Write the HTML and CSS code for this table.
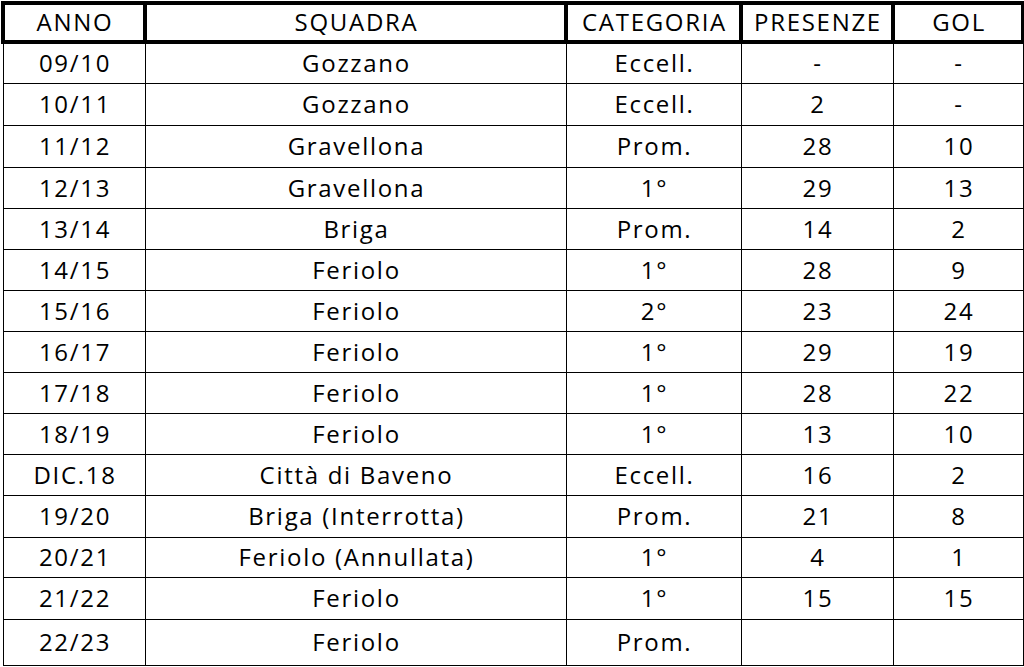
FILE: index.html
```html
<!DOCTYPE html>
<html lang="it">
<head>
<meta charset="utf-8">
<title>Carriera</title>
<link rel="stylesheet" href="styles.css">
</head>
<body>
<table class="career">
  <colgroup>
    <col class="c-anno">
    <col class="c-squadra">
    <col class="c-cat">
    <col class="c-pres">
    <col class="c-gol">
  </colgroup>
  <thead>
    <tr><th>ANNO</th><th>SQUADRA</th><th>CATEGORIA</th><th>PRESENZE</th><th>GOL</th></tr>
  </thead>
  <tbody>
    <tr class="r40"><td>09/10</td><td>Gozzano</td><td>Eccell.</td><td>-</td><td>-</td></tr>
    <tr class="r42"><td>10/11</td><td>Gozzano</td><td>Eccell.</td><td>2</td><td>-</td></tr>
    <tr class="r42"><td>11/12</td><td>Gravellona</td><td>Prom.</td><td>28</td><td>10</td></tr>
    <tr><td>12/13</td><td>Gravellona</td><td>1°</td><td>29</td><td>13</td></tr>
    <tr><td>13/14</td><td>Briga</td><td>Prom.</td><td>14</td><td>2</td></tr>
    <tr><td>14/15</td><td>Feriolo</td><td>1°</td><td>28</td><td>9</td></tr>
    <tr><td>15/16</td><td>Feriolo</td><td>2°</td><td>23</td><td>24</td></tr>
    <tr><td>16/17</td><td>Feriolo</td><td>1°</td><td>29</td><td>19</td></tr>
    <tr><td>17/18</td><td>Feriolo</td><td>1°</td><td>28</td><td>22</td></tr>
    <tr><td>18/19</td><td>Feriolo</td><td>1°</td><td>13</td><td>10</td></tr>
    <tr><td>DIC.18</td><td>Città di Baveno</td><td>Eccell.</td><td>16</td><td>2</td></tr>
    <tr class="r42"><td>19/20</td><td>Briga (Interrotta)</td><td>Prom.</td><td>21</td><td>8</td></tr>
    <tr class="r40"><td>20/21</td><td>Feriolo (Annullata)</td><td>1°</td><td>4</td><td>1</td></tr>
    <tr class="r42"><td>21/22</td><td>Feriolo</td><td>1°</td><td>15</td><td>15</td></tr>
    <tr class="r46"><td>22/23</td><td>Feriolo</td><td>Prom.</td><td></td><td></td></tr>
  </tbody>
</table>
</body>
</html>
```

FILE: styles.css
```css
html, body {
  margin: 0;
  padding: 0;
  background: #ffffff;
}

body {
  padding: 1px 0 0 1px;
}

.career {
  border-collapse: collapse;
  table-layout: fixed;
  width: 1020px;
  font-family: "Open Sans", Lato, "Liberation Sans", sans-serif;
  font-size: 24px;
  font-weight: 500;
  letter-spacing: 1.7px;
  color: #000;
}

.c-anno { width: 142px; }
.c-squadra { width: 421px; }
.c-cat { width: 175px; }
.c-pres { width: 152px; }
.c-gol { width: 130px; }

.career th,
.career td {
  padding: 0 0 2px 2px;
  text-align: center;
  vertical-align: middle;
  white-space: nowrap;
  overflow: hidden;
}

.career th {
  font-weight: 500;
  height: 32px;
  border: 4px solid #000;
}

.career td {
  height: 38px;
  border: 1px solid #000;
}

.career tr.r40 td { height: 37px; }
.career tr.r42 td { height: 39px; }
.career tr.r46 td { height: 43px; }
```
